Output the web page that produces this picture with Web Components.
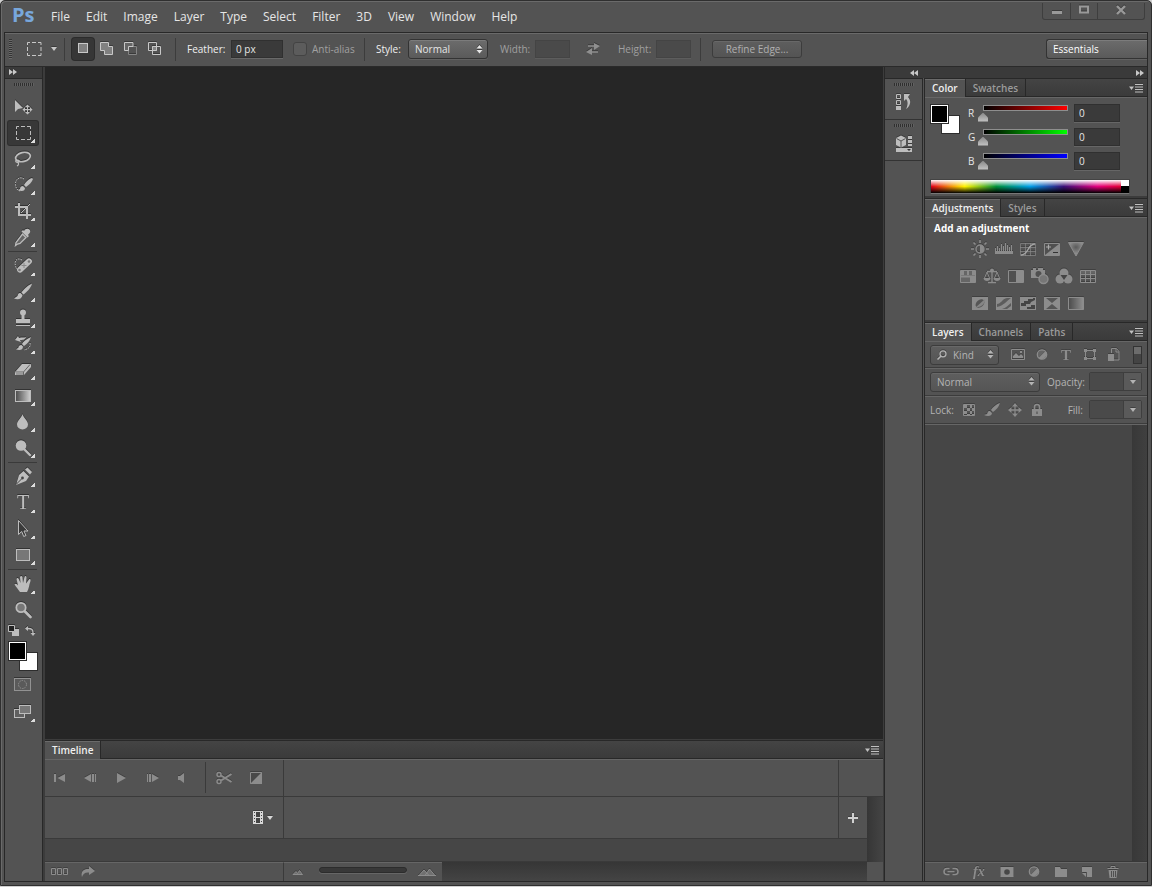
<!DOCTYPE html>
<html lang="en">
<head>
<meta charset="utf-8">
<title>Ps</title>
<style>
    html, body { height: 100%; }
    body {
        margin: 0;
        background: #d0d0d0;
        font: 10px/14px "Open Sans", "Noto Sans", sans-serif;
        color: #e6e6e6;
    }
</style>
</head>
<body>
<ps-window>
    <ps-menu-bar slot="menu"></ps-menu-bar>
    <ps-options-bar slot="options"></ps-options-bar>
    <ps-toolbox slot="tools"></ps-toolbox>
    <ps-timeline slot="timeline"></ps-timeline>
    <ps-dock slot="dock">
        <ps-panel tabs="Color,Swatches"><ps-color></ps-color></ps-panel>
        <ps-panel tabs="Adjustments,Styles"><ps-adjustments></ps-adjustments></ps-panel>
        <ps-panel tabs="Layers,Channels,Paths" grow><ps-layers></ps-layers></ps-panel>
    </ps-dock>
</ps-window>

<script>
// name: [width, height, markup]
const ICONS = {
    // toolbox
    move: [20, 20, '<path d="M2 3v12l3-3 5-1z" fill="currentColor"/><path d="M14.500 8v9M10 12.500h9" stroke="currentColor"/><path d="M14.500 7.500l2.500 2.500h-5zM14.500 17.500l2.500-2.500h-5zM9.500 12.500l2.500-2.500v5zM19.500 12.500l-2.500-2.500v5z" fill="currentColor"/>'],
    marquee: [20, 20, '<path d="M3.500 6V3.500H6M8 3.500h4M14 3.500h3.500V6M17.500 8v4M17.500 14v2.500H14M12 16.500H8M6 16.500H3.500V14M3.500 12V8" stroke="currentColor" fill="none"/>'],
    lasso: [20, 20, '<ellipse cx="10" cy="8" rx="7.500" ry="4.500" transform="rotate(-14 10 8)" stroke="currentColor" stroke-width="1.700" fill="none"/><path d="M3.500 11c-2 1 0 3 2 2s-1-3-2-1M5 13c1 2 1 3-1 4" stroke="currentColor" stroke-width="1.200" fill="none"/>'],
    quickselect: [20, 20, '<path d="M11 4C7 1 2 4 2.500 9.500S6 16 8 16" stroke="currentColor" stroke-dasharray="1.500 1" fill="none"/><path d="M19 3c-4 1-7 5-8 7l2 2c3-2 6-5 7-8zM10 11c-2 0-3 1-3 3l-2 1c4 2 7 1 7-2z" fill="currentColor"/>'],
    crop: [20, 20, '<path d="M6 2v12h12M2 6h12v12" stroke="currentColor" stroke-width="2" fill="none"/><path d="M8 12l9-9" stroke="currentColor"/>'],
    eyedropper: [20, 20, '<path d="M12 2.500c3-2 6 0 5 3l-2 2.500 1 1-1.500 1.500-6-6L10 3l1 1z" fill="currentColor"/><path d="M9.500 7l3.500 3.500-6 6-2.500.500-2 1.500.500-3z" fill="#666" stroke="currentColor" stroke-width="1.300"/>'],
    heal: [20, 20, '<path d="M9 4C4 1 1 5 2.500 9.500 3 13 5 14 6 14" stroke="currentColor" stroke-dasharray="1.500 1" fill="none"/><rect x="2.500" y="6.500" width="18" height="6" rx="3" transform="rotate(-43 11.500 9.500)" fill="currentColor"/><circle cx="6.500" cy="14" r="1.300" fill="#777"/><circle cx="16" cy="5.500" r="1.300" fill="#777"/><path d="M11 7v5M8.500 9.500h5" stroke="#888"/>'],
    brush: [20, 20, '<path d="M19 1.500C14 4 10 8 8.500 10.500l2 2C14 10 18 6 19 1.500zM7.500 11C5 11 5 12.500 4.500 14L1 16.500c4 1.500 8 .500 8.500-3.500z" fill="currentColor"/>'],
    stamp: [20, 20, '<circle cx="10" cy="4.500" r="3" fill="currentColor"/><path d="M8.500 7h3v4H17V15H3v-4h5.500zM3 17h14v1H3z" fill="currentColor"/>'],
    history: [20, 20, '<path d="M18 3C13 5 10 8 9 10l2 2c3-2 6-5 7-9zM8.500 11c-2 0-3 1-3 2.500L3 15.500c4 1 7 .500 7-3zM2 6l3-4 1 2c3-1 5 0 7-1-1 3-4 3-6 3l1 2z" fill="currentColor"/><path d="M17 9c1 4-2 6-6 7" stroke="currentColor" stroke-dasharray="1.500 1" fill="none"/>'],
    eraser: [20, 20, '<path d="M2 12l7-8h9v3l-7 8H2z" fill="currentColor"/><path d="M2.500 12h8L17 4.500M10.500 12v3" stroke="#666" fill="none"/><path d="M3 12h7v3H3z" fill="#999"/>'],
    gradient: [20, 20, '<defs><linearGradient id="g"><stop stop-color="#4a4a4a"/><stop offset="1" stop-color="#d0d0d0"/></linearGradient></defs><rect x="2.500" y="4.500" width="15" height="11" fill="url(#g)" stroke="currentColor"/>'],
    blur: [20, 20, '<path d="M9.500 2c1 4 5.500 6.500 5.500 10.500a5.500 5 0 0 1-11 0C4 8.500 8.500 6 9.500 2z" fill="currentColor"/>'],
    dodge: [20, 20, '<circle cx="8" cy="7.500" r="5.300" fill="currentColor"/><path d="M11 11l6 6" stroke="currentColor" stroke-width="2.400" stroke-linecap="round"/>'],
    pen: [20, 20, '<path d="M12 2.500l2.500-2 4.500 4.500-2 2.500z" fill="currentColor"/><path d="M10.500 4L16 9.500 13 14l-10 4 3-10z" fill="currentColor"/><path d="M3 17.500l6-6" stroke="#444"/><circle cx="9.500" cy="11" r="1.400" fill="#444"/>'],
    type: [20, 20, '<text x="10" y="16" text-anchor="middle" font-family="Liberation Serif, serif" font-size="20" fill="currentColor">T</text>'],
    path: [20, 20, '<path d="M5.500 1.500v14l3.200-3 2 5 2.300-1-2-4.500H15z" fill="#3a3a3a" stroke="currentColor"/>'],
    shape: [20, 20, '<rect x="3.500" y="4.500" width="13" height="11" fill="#777" stroke="currentColor"/>'],
    hand: [20, 20, '<path d="M7 18c-2-3-4-5-5.500-7.500 1-1.500 2.500-.500 3.500 1L3.500 5c.500-1.500 2-1 2.500.500L7.500 9 7 3c.500-1.500 2-1.500 2.500 0l.500 6L11.500 3c.500-1.500 2-1 2 .500L13 9.500 16 5.500c1-1 2 0 1.500 1.500-1.500 4-1.500 8-3.500 11z" fill="currentColor"/>'],
    zoom: [20, 20, '<circle cx="8" cy="7.500" r="4.700" fill="#777" stroke="currentColor" stroke-width="1.800"/><path d="M12 11.500l5.500 5.500" stroke="currentColor" stroke-width="2.600" stroke-linecap="round"/>'],
    defaults: [11, 11, '<path d="M4 4h7v7H4z" fill="currentColor"/><path d="M.500.500h6v6h-6z" fill="#222" stroke="currentColor"/>'],
    swap: [11, 11, '<path d="M3 3.500c4 0 5 1 5 4.500" stroke="currentColor" stroke-width="1.300" fill="none"/><path d="M3 1v5L0 3.500zM5.500 8h5L8 11z" fill="currentColor"/>'],
    mask: [18, 14, '<rect x=".500" y=".500" width="16" height="12" fill="#5a5a5a" stroke="#929292"/><circle cx="8.500" cy="6.500" r="4" stroke="#929292" stroke-dasharray="1.500 1" fill="none"/>'],
    screen: [18, 14, '<rect x=".500" y="4.500" width="10" height="8" fill="#606060" stroke="currentColor"/><rect x="5.500" y=".500" width="11" height="8" fill="#777" stroke="currentColor"/>'],
    // options bar
    selnew: [14, 14, '<rect x="2.500" y="1.500" width="9" height="9" fill="#808080" stroke="currentColor"/>'],
    seladd: [14, 14, '<path d="M.500.500h8v4h4v8h-8v-4h-4z" fill="#808080" stroke="currentColor"/>'],
    selsub: [14, 14, '<path d="M4.500 4.500h8v8h-8z" stroke="#858585" fill="none"/><path d="M9 .500H.500v8h4v-4H9z" fill="#666" stroke="currentColor"/>'],
    selint: [14, 14, '<path d="M4 4h5v5H4z" fill="#858585"/><path d="M.500.500h8v8h-8zM4.500 4.500h8v8h-8z" stroke="currentColor" fill="none"/>'],
    exchange: [14, 12, '<path d="M2 3h7M5 9h7" stroke="currentColor" stroke-width="1.600"/><path d="M8 0l6 3-6 4zM6 5v7L0 9z" fill="currentColor"/>'],
    caret: [6, 4, '<path d="M0 0h6L3 4z" fill="currentColor"/>'],
    updown: [7, 9, '<path d="M3.500 0l3 3.500h-6zM.500 5h6l-3 3.500z" fill="currentColor"/>'],
    min: [12, 10, '<path d="M1 6h10v3H1z" fill="currentColor"/>'],
    max: [12, 10, '<path d="M2 1.500h8v6H2z" stroke="currentColor" stroke-width="2" fill="none"/>'],
    close: [12, 10, '<path d="M2 1l8 8M10 1L2 9" stroke="currentColor" stroke-width="2.400"/>'],
    expand: [8, 6, '<path d="M0 0l4 3-4 3zM4 0l4 3-4 3z" fill="currentColor"/>'],
    collapse: [8, 6, '<path d="M4 0L0 3l4 3zM8 0L4 3l4 3z" fill="currentColor"/>'],
    flyout: [14, 9, '<path d="M0 2.500h5L2.500 6z" fill="currentColor"/><path d="M6 .500h8M6 3h8M6 5.500h8M6 8h8" stroke="currentColor"/>'],
    historypanel: [16, 18, '<path d="M.500 1.500h4v4h-4zM.500 7.500h4v4h-4z" stroke="currentColor" fill="none"/><path d="M0 13h5v4H0zM8 1h6L12 4c4 4 2 10-2 12 2-4 2-8 0-10L8 8z" fill="currentColor"/>'],
    properties: [16, 18, '<path d="M0 4l5-2.500L10 4v7l-5 2.500L0 11z" fill="currentColor"/><path d="M.500 4.500L5 7l4.500-2.500M5 7v6" stroke="#555" fill="none"/><path d="M12 2h4v3h-4zM12 6h4v3h-4zM12 10h4v2h-4zM0 14h16v4H0z" fill="currentColor"/><path d="M11 15h4l-2 2z" fill="#333"/>'],
    // adjustments
    brightness: [18, 18, '<circle cx="9" cy="9" r="4" stroke="currentColor" stroke-width="1.400" fill="none"/><path d="M9 5a4 4 0 0 1 0 8z" fill="currentColor"/><path d="M9 0v3M9 15v3M0 9h3M15 9h3M2.500 2.500l2 2M13.500 13.500l2 2M15.500 2.500l-2 2M4.500 13.500l-2 2" stroke="currentColor" stroke-width="1.600"/>'],
    levels: [18, 18, '<path d="M0 11h18v3H0z" fill="currentColor"/><path d="M.500 11V8M2.500 11V6M4.500 11V8M6.500 11V4M8.500 11V6M10.500 11V3M12.500 11V5M14.500 11V7M16.500 11V5" stroke="currentColor"/>'],
    curves: [18, 18, '<path d="M1.500 3.500h15v12h-15zM6.500 3v13M11.500 3v13M1 7.500h16M1 11.500h16" stroke="currentColor" stroke-opacity=".7" fill="none"/><path d="M2 15c8 0 6-11 14-11" stroke="#a5a5a5" stroke-width="1.400" fill="none"/>'],
    exposure: [18, 18, '<path d="M1.500 3.500h15v12h-15z" stroke="currentColor" fill="#505050"/><path d="M16 4v11H2z" fill="currentColor"/><path d="M3 7h5M5.500 4.500v5" stroke="#aaa" stroke-width="1.200"/><path d="M10 12.500h5" stroke="#333"/>'],
    vibrance: [18, 18, '<defs><radialGradient id="v" cy=".35"><stop stop-color="#5a5a5a"/><stop offset="1" stop-color="#909090"/></radialGradient></defs><path d="M1.500 2.500h15L9 16z" fill="url(#v)" stroke="currentColor"/>'],
    hue: [18, 18, '<path d="M1.500 3.500h15v12h-15z" stroke="currentColor" fill="#666"/><path d="M2 4h3v4H2zM8 4h2v4H8zM13 4h3v4h-3zM1 8.500h16v2H1zM11 10h5v5h-5z" fill="currentColor"/>'],
    balance: [18, 18, '<path d="M9 2v13M4 4.500h10M5 15.500h8" stroke="currentColor" stroke-width="1.400"/><path d="M4 5L1.500 11M4 5l2.500 6M14 5l-2.500 6M14 5l2.500 6" stroke="currentColor"/><path d="M.500 11h7c0 4-7 4-7 0zM10.500 11h7c0 4-7 4-7 0z" fill="currentColor"/><circle cx="9" cy="3.500" r="2" fill="currentColor"/>'],
    bw: [18, 18, '<path d="M1.500 3.500h15v12h-15z" stroke="currentColor" fill="#505050"/><path d="M9 4h7v11H9z" fill="currentColor"/>'],
    photo: [18, 18, '<path d="M0 3h2V1h3v2h2V1h5v2h2v8H0z" fill="currentColor"/><circle cx="7.500" cy="7" r="3" fill="#505050"/><circle cx="12.500" cy="12" r="4.500" fill="#777" stroke="currentColor" stroke-width="1.500"/>'],
    mixer: [18, 18, '<circle cx="9" cy="6" r="4.500" fill="currentColor"/><circle cx="5" cy="12" r="4.500" fill="currentColor"/><circle cx="13" cy="12" r="4.500" fill="currentColor"/><path d="M5.500 8h7L9 13z" fill="#444"/>'],
    lookup: [18, 18, '<path d="M1.500 3.500h15v12h-15zM6.500 3v13M11.500 3v13M1 7.500h16M1 11.500h16" stroke="currentColor" fill="none"/><path d="M2 4h14v3H2z" fill="currentColor" opacity=".4"/>'],
    invert: [18, 18, '<path d="M1 3h16v13H1z" fill="currentColor"/><ellipse cx="9" cy="9.500" rx="5" ry="3.500" transform="rotate(-40 9 9.500)" fill="#555"/><path d="M4 14L14 5c1 3-3 8-7 8z" fill="#858585"/>'],
    posterize: [18, 18, '<path d="M1 3h16v13H1z" fill="currentColor"/><path d="M2 10C6 10 7 5 12 4h4C11 7 10 11 2 13zM7 15c4-1 6-4 9-6v3l-4 3z" fill="#5c5c5c"/>'],
    threshold: [18, 18, '<path d="M1 3h16v13H1z" fill="currentColor"/><path d="M2 9h3V7h4V5h5V4h2v2l-4 2-1 2H7v2H2zM8 15v-2h4v-2h4v4z" fill="#444"/>'],
    gradmap: [18, 18, '<path d="M1 3h16v13H1z" fill="currentColor"/><path d="M3 4h12L9 9zM3 15h12l-6-5z" fill="#555"/>'],
    selective: [18, 18, '<defs><linearGradient id="s"><stop stop-color="#4a4a4a"/><stop offset="1" stop-color="#909090"/></linearGradient></defs><path d="M1.500 3.500h15v12h-15z" stroke="currentColor" fill="url(#s)"/>'],
    // layers
    search: [10, 10, '<circle cx="6" cy="3.800" r="3" stroke="currentColor" stroke-width="1.300" fill="none"/><path d="M4 6L.500 9.500" stroke="currentColor" stroke-width="1.600"/>'],
    image: [14, 14, '<path d="M.500 1.500h13v10H.500z" stroke="currentColor" fill="none"/><path d="M2 10V8l3-3 3 3 2-2 2 2v2z" fill="currentColor"/><path d="M9 3h2v2H9z" fill="currentColor"/>'],
    adjust: [14, 14, '<circle cx="7" cy="6.500" r="4.700" stroke="currentColor" stroke-width="1.300" fill="none"/><path d="M10.500 3a5 5 0 0 1-7 7z" fill="currentColor"/><path d="M3.500 10a5 5 0 0 1 7-7z" fill="currentColor" opacity=".4"/>'],
    typefilter: [14, 14, '<text x="7" y="12" text-anchor="middle" font-family="Liberation Serif, serif" font-weight="bold" font-size="15" fill="currentColor">T</text>'],
    vector: [14, 14, '<path d="M3 2.500h8M3 10.500h8M2.500 3v7M11.500 3v7" stroke="currentColor"/><path d="M1 1h3v3H1zM10 1h3v3h-3zM1 9h3v3H1zM10 9h3v3h-3z" fill="currentColor"/>'],
    smart: [14, 14, '<path d="M4.500 5V.500h5l2.500 3v8.500H7M9 1v3h3" stroke="currentColor" fill="none"/><path d="M1 6h6v7H1z" fill="currentColor"/>'],
    pixels: [14, 14, '<path d="M1.500 1.500h11v11h-11z" stroke="currentColor" fill="none"/><path d="M2 2h3v3H2zM8 2h2v3H8zM5 5h3v3H5zM10 5h2v3h-2zM2 8h3v3H2zM8 8h2v3H8zM5 11h3v2H5zM10 11h2v2h-2z" fill="currentColor"/>'],
    lockbrush: [16, 14, '<path d="M16 0c-4 1-8 5-9 7l2 2c3-2 6-5 7-9zM6 8c-3 0-2 2-3 3l-3 1c4 2 8 1 8-2z" fill="currentColor"/>'],
    lockmove: [14, 14, '<path d="M7 2v10M2 7h10" stroke="currentColor" stroke-width="1.300"/><path d="M7 0l3 3.500H4zM7 14l3-3.500H4zM0 7l3.500-3v6zM14 7l-3.500-3v6z" fill="currentColor"/>'],
    lock: [14, 14, '<path d="M4.500 7V4a2.500 2.500 0 0 1 5 0v3" stroke="currentColor" stroke-width="1.600" fill="none"/><path d="M2 6h10v7H2z" fill="currentColor"/><path d="M6.500 8.500h1v2.500h-1z" fill="#444"/>'],
    link: [16, 12, '<path d="M6.500 8.500H4a3 3 0 0 1 0-6h2.500M9.500 2.500H12a3 3 0 0 1 0 6H9.500M4.500 5.500h7" stroke="currentColor" stroke-width="1.600" fill="none"/>'],
    fx: [16, 12, '<text x="1" y="10" font-family="Liberation Serif, serif" font-style="italic" font-weight="bold" font-size="14" fill="currentColor">fx</text>'],
    addmask: [14, 12, '<path d="M.500 1h13v10H.500z" fill="currentColor"/><circle cx="7" cy="6" r="2.800" fill="#484848"/>'],
    folder: [14, 12, '<path d="M1 1h5l1 2h6v8H1z" fill="currentColor"/>'],
    newlayer: [14, 12, '<path d="M2 1h10v10H7V6H2z" fill="currentColor"/><path d="M2 7h4v4z" fill="currentColor"/>'],
    trash: [12, 12, '<path d="M4 2V.500h4V2M.500 2.500h11" stroke="currentColor" fill="none"/><path d="M1.500 4h9l-1 8h-7z" fill="currentColor"/><path d="M4.500 5v6M6.500 5v6M8.500 5v6" stroke="#505050"/>'],
    // timeline
    first: [12, 10, '<path d="M0 1h2v8H0zM11 1v8L3.500 5z" fill="currentColor"/>'],
    prev: [12, 10, '<path d="M6 1v8L-1 5zM7 1h2v8H7zM10 1h1v8h-1z" fill="currentColor"/>'],
    play: [12, 10, '<path d="M1 0v10l9-5z" fill="currentColor"/>'],
    next: [12, 10, '<path d="M0 1h1v8H0zM2 1h2v8H2zM5 1v8l7-4z" fill="currentColor"/>'],
    audio: [8, 10, '<path d="M0 3h2l4-3v10L2 7H0z" fill="currentColor"/>'],
    scissors: [15, 14, '<circle cx="3" cy="3.500" r="2" stroke="currentColor" stroke-width="1.500" fill="none"/><circle cx="3" cy="10.500" r="2" stroke="currentColor" stroke-width="1.500" fill="none"/><path d="M5 4.500L15.500 11M5 9.500L15.500 3" stroke="currentColor" stroke-width="2"/>'],
    transition: [12, 12, '<path d="M.500.500h11v11H.500z" stroke="currentColor" fill="#484848"/><path d="M12 0v12H0z" fill="currentColor"/>'],
    film: [10, 13, '<path d="M0 0h10v13H0z" fill="currentColor"/><path d="M3 1h4v5H3zM3 7h4v5H3zM1 1h1v1H1zM1 4h1v1H1zM1 7h1v1H1zM1 10h1v1H1zM8 1h1v1H8zM8 4h1v1H8zM8 7h1v1H8zM8 10h1v1H8z" fill="#444"/>'],
    plus: [10, 10, '<path d="M5 0v10M0 5h10" stroke="currentColor" stroke-width="2"/>'],
    frames: [18, 8, '<path d="M.500.500h4v6h-4zM6.500.500h4v6h-4zM12.500.500h4v6h-4z" stroke="currentColor" fill="none"/>'],
    render: [14, 12, '<path d="M8 0l6 5-6 4V6.500C4 6 2 8 1 11-1 5 4 2.500 8 3z" fill="currentColor"/>'],
    smallhill: [10, 6, '<path d="M0 5.500h9.500L6.500 1.500l-2 3-1.500-2z" stroke="currentColor" fill="#707070"/>'],
    bighill: [18, 8, '<path d="M1 7.500L6 2l5 5.500M7 7.500L11.500 1 17 7.500zM0 7.500h18" stroke="currentColor" fill="#707070"/>']
};

const BASE = `
    :host { display: block; box-sizing: border-box; }
    * { box-sizing: border-box; }
    button, input, select { font: inherit; color: inherit; margin: 0; padding: 0; border: 0; border-radius: 0; background: none; }
    button { display: flex; align-items: center; justify-content: center; }
    select { appearance: none; }
`;

class PsElement extends HTMLElement {
    connectedCallback() {
        if (this.shadowRoot) return;
        this.attachShadow({ mode: 'open' });
        this.shadowRoot.innerHTML = `<style>${BASE}${this.styles()}</style>${this.markup()}`;
    }
    styles() { return ''; }
    markup() { return '<slot></slot>'; }
}

const icon = name => `<ps-icon name="${name}"></ps-icon>`;
const iconButton = (name, label, cls = '') => `<button type="button" class="${cls}" aria-label="${label}">${icon(name)}</button>`;

class PsIcon extends PsElement {
    styles() {
        return `
            :host { flex: none; }
            svg { display: block; overflow: visible; filter: drop-shadow(0 -1px 0 var(--icon-shadow, #3a3a3a)); }
        `;
    }
    markup() {
        const [w, h, body] = ICONS[this.getAttribute('name')];
        return `<svg width="${w}" height="${h}" viewBox="0 0 ${w} ${h}" aria-hidden="true">${body}</svg>`;
    }
}

class PsWindow extends PsElement {
    styles() {
        return `
            :host {
                display: flex;
                flex-direction: column;
                height: calc(100vh - 1px);
                padding: 2px 3px 3px 3px;
                border: 1px solid #2f2f2f;
                border-radius: 5px 5px 0 0;
                background: #535353;
                box-shadow: inset 1px 1px 0 #6a6a6a;
            }
            .frame {
                flex: 1;
                display: flex;
                flex-direction: column;
                min-height: 0;
                border: 1px solid #282828;
            }
            .main { flex: 1; display: flex; min-height: 0; }
            .center { flex: 1; display: flex; flex-direction: column; min-width: 0; background: #3c3c3c; padding: 0 1px 0 2px; }
            .canvas { flex: 1; background: #262626; }
        `;
    }
    markup() {
        return `
            <slot name="menu"></slot>
            <div class="frame">
                <slot name="options"></slot>
                <div class="main">
                    <slot name="tools"></slot>
                    <div class="center">
                        <div class="canvas"></div>
                        <slot name="timeline"></slot>
                    </div>
                    <slot name="dock"></slot>
                </div>
            </div>
        `;
    }
}

class PsMenuBar extends PsElement {
    styles() {
        return `
            :host { display: flex; height: 29px; padding-left: 8px; font-size: 12px; line-height: 16px; }
            .logo { width: 39px; font-size: 20px; line-height: 24px; font-weight: bold; color: #78a7dc; }
            nav { flex: 1; display: flex; gap: 16px; align-items: center; padding-bottom: 1px; }
            .controls { display: flex; height: 17px; margin-right: 3px; border: 1px solid #3e3e3e; border-top: 0; border-radius: 0 0 3px 3px; color: #999; }
            .controls button { width: 27px; padding-bottom: 2px; }
            .controls button + button { border-left: 1px solid #3e3e3e; }
            .controls button:last-child { width: 47px; }
        `;
    }
    markup() {
        const items = ['File', 'Edit', 'Image', 'Layer', 'Type', 'Select', 'Filter', '3D', 'View', 'Window', 'Help'];
        return `
            <div class="logo">Ps</div>
            <nav>${items.map(i => `<button type="button">${i}</button>`).join('')}</nav>
            <div class="controls">
                ${iconButton('min', 'Minimize')}${iconButton('max', 'Maximize')}${iconButton('close', 'Close')}
            </div>
        `;
    }
}

// Drop-down with its own arrows; attributes: label, value, icon, plain
class PsSelect extends PsElement {
    styles() {
        return `
            :host {
                display: flex;
                align-items: center;
                height: 20px;
                border: 1px solid #333;
                border-radius: 3px;
                background: linear-gradient(#6c6c6c, #5a5a5a);
                box-shadow: inset 0 1px 0 #7c7c7c, 0 1px 0 #616161;
            }
            select { flex: 1; min-width: 0; height: 18px; padding-left: 6px; outline: 0; }
            ps-icon { margin-right: 4px; }
            ps-icon.lead { margin: 0 0 0 6px; }
        `;
    }
    markup() {
        const lead = this.getAttribute('icon');
        return `
            ${lead ? `<ps-icon class="lead" name="${lead}"></ps-icon>` : ''}
            <select aria-label="${this.getAttribute('label')}"><option>${this.getAttribute('value')}</option></select>
            ${this.hasAttribute('plain') ? '' : icon('updown')}
        `;
    }
}

class PsOptionsBar extends PsElement {
    styles() {
        return `
            :host {
                display: flex;
                align-items: center;
                height: 34px;
                border-top: 1px solid #6a6a6a;
                border-bottom: 1px solid #2a2a2a;
                padding: 0 0 2px 4px;
                --icon-shadow: #3a3a3a;
            }
            .grip { width: 3px; height: 20px; margin-right: 14px; background: repeating-linear-gradient(#333 0 1px, #6a6a6a 1px 2px); }
            .preset { gap: 9px; width: 32px; color: #c8c8c8; }
            .sep { width: 1px; height: 23px; background: #3c3c3c; }
            .preset + .sep { margin-left: 6px; }
            .modes { display: flex; gap: 2px; margin: 0 9px 0 7px; color: #c8c8c8; }
            .modes button { width: 22px; height: 22px; border-radius: 3px; }
            .modes .on { background: #363636; box-shadow: 0 0 0 1px #2b2b2b; }
            label { color: #f0f0f0; }
            input[type=text] {
                height: 18px;
                padding: 0 4px;
                background: #3a3a3a;
                border: 1px solid #303030;
                box-shadow: 0 1px 0 #696969;
            }
            input[type=text]:disabled { background: #4a4a4a; border-color: #444; box-shadow: 0 1px 0 #5d5d5d; }
            input[type=checkbox] { appearance: none; width: 14px; height: 14px; border: 1px solid #434343; border-radius: 3px; background: #5c5c5c; }
            .off { color: #a0a0a0; }
            .exchange { margin: 0 18px 0 16px; color: #8f8f8f; }
            .refine { width: 90px; height: 18px; border: 1px solid #3c3c3c; border-radius: 3px; background: linear-gradient(#5e5e5e, #545454); color: #b0b0b0; box-shadow: inset 0 1px 0 #686868; }
            .gap { flex: 1; }
            .workspace { width: 101px; border-right: 0; border-radius: 3px 0 0 3px; color: #fff; }
        `;
    }
    markup() {
        return `
            <div class="grip"></div>
            <button type="button" class="preset" aria-label="Tool preset">
                <svg width="15" height="14" aria-hidden="true"><path d="M.5 3V.5H3M5 .5h4M11 .5h3V3M14 5v4M14 11v2.500h-3M9 13.500H5M3 13.500H.5V11M.5 9V5" stroke="currentColor" fill="none"/></svg>
                ${icon('caret')}
            </button>
            <div class="sep"></div>
            <div class="modes">
                ${iconButton('selnew', 'New selection', 'on')}${iconButton('seladd', 'Add to selection')}${iconButton('selsub', 'Subtract from selection')}${iconButton('selint', 'Intersect with selection')}
            </div>
            <div class="sep"></div>
            <label for="feather" style="width: 44px; margin-left: 11px">Feather:</label>
            <input id="feather" type="text" value="0 px" style="width: 52px">
            <input id="aa" type="checkbox" disabled style="margin: 0 5px 0 10px">
            <label for="aa" class="off" style="width: 52px">Anti-alias</label>
            <div class="sep"></div>
            <label style="width: 32px; margin-left: 11px">Style:</label>
            <ps-select label="Style" value="Normal" style="width: 80px"></ps-select>
            <label for="w" class="off" style="width: 35px; margin-left: 12px">Width:</label>
            <input id="w" type="text" disabled style="width: 35px">
            ${iconButton('exchange', 'Swap height and width', 'exchange')}
            <label for="h" class="off" style="width: 38px">Height:</label>
            <input id="h" type="text" disabled style="width: 35px">
            <div class="sep" style="margin: 0 11px 0 9px"></div>
            <button type="button" class="refine">Refine Edge...</button>
            <div class="gap"></div>
            <ps-select class="workspace" label="Workspace" value="Essentials" plain></ps-select>
        `;
    }
}

class PsSwatches extends PsElement {
    styles() {
        return `
            :host { display: grid; width: 30px; height: 30px; grid-template: 11px 9px 10px / 11px 8px 11px; }
            button { border: 1px solid #2d2d2d; }
            .back { grid-area: 2 / 2 / 4 / 4; background: #fff; }
            .front { grid-area: 1 / 1 / 3 / 3; background: #000; box-shadow: inset 0 0 0 1px #fff; }
        `;
    }
    markup() {
        return `
            <button type="button" class="back" aria-label="Background color"></button>
            <button type="button" class="front" aria-label="Foreground color"></button>
        `;
    }
}

class PsToolbox extends PsElement {
    styles() {
        return `
            :host { display: flex; flex-direction: column; width: 38px; border-right: 1px solid #282828; color: #bdbdbd; --icon-shadow: #333; }
            .head { justify-content: flex-start; height: 12px; padding: 0 0 1px 4px; background: #3a3a3a; border-bottom: 1px solid #2a2a2a; color: #c8c8c8; }
            .grip { width: 20px; height: 3px; margin: 4px 0 9px 9px; background: repeating-linear-gradient(90deg, #2f2f2f 0 1px, #616161 1px 2px); }
            .tools { display: flex; flex-direction: column; gap: 2px; padding-left: 3px; }
            .tools button { width: 30px; height: 24px; border-radius: 2px; }
            .tools button.on { background: #383838; box-shadow: 0 0 0 1px #2e2e2e; }
            .more { background: linear-gradient(135deg, transparent 50%, #dcdcdc 50%) no-repeat right 3px bottom 2px / 4px 4px; }
            .tools .on.more { background: linear-gradient(135deg, transparent 50%, #dcdcdc 50%) no-repeat right 3px bottom 2px / 4px 4px, #383838; }
            hr { width: 29px; height: 1px; margin: 0; border: 0; background: #3a3a3a; }
            .mini { display: flex; justify-content: space-between; width: 28px; margin: 3px 0 5px 3px; }
            ps-swatches { margin-left: 3px; }
            .modes { display: flex; flex-direction: column; gap: 3px; padding: 2px 0 0 3px; }
            .modes button { width: 30px; height: 24px; }
        `;
    }
    markup() {
        const groups = [
            ['move', 'marquee', 'lasso', 'quickselect', 'crop', 'eyedropper'],
            ['heal', 'brush', 'stamp', 'history', 'eraser', 'gradient', 'blur', 'dodge'],
            ['pen', 'type', 'path', 'shape'],
            ['hand', 'zoom']
        ];
        const single = ['move', 'zoom'];
        const tool = n => iconButton(n, n, (n === 'marquee' ? 'on ' : '') + (single.includes(n) ? '' : 'more'));
        return `
            <button type="button" class="head" aria-label="Expand panels">${icon('expand')}</button>
            <div class="grip"></div>
            <div class="tools">${groups.map(g => g.map(tool).join('')).join('<hr>')}</div>
            <div class="mini">${iconButton('defaults', 'Default colors')}${iconButton('swap', 'Swap colors')}</div>
            <ps-swatches></ps-swatches>
            <div class="modes">${iconButton('mask', 'Quick mask')}${iconButton('screen', 'Screen mode', 'more')}</div>
        `;
    }
}

class PsPanel extends PsElement {
    styles() {
        return `
            :host { display: flex; flex-direction: column; border-top: 1px solid #282828; background: #535353; }
            :host([grow]) { flex: 1; min-height: 0; }
            .bar { display: flex; height: 18px; background: linear-gradient(#444, #3a3a3a); box-shadow: inset 0 -1px 0 #282828; flex: none; }
            .bar button { padding: 0 7px 1px; font-weight: 600; line-height: 14px; color: #9b9b9b; border-right: 1px solid #282828; }
            .bar button.on { background: #535353; color: #efefef; box-shadow: inset 0 1px 0 #6a6a6a; }
            .bar .fly { margin-left: auto; padding: 0 4px; border: 0; color: #c0c0c0; }
            .body { flex: 1; display: flex; flex-direction: column; min-height: 0; border-top: 1px solid #666; }
        `;
    }
    markup() {
        const tabs = this.getAttribute('tabs').split(',');
        return `
            <div class="bar">
                ${tabs.map((t, i) => `<button type="button" class="${i ? '' : 'on'}">${t}</button>`).join('')}
                ${iconButton('flyout', 'Panel menu', 'fly')}
            </div>
            <div class="body"><slot></slot></div>
        `;
    }
}

class PsDock extends PsElement {
    styles() {
        return `
            :host { display: flex; flex-direction: column; width: 263px; border-left: 1px solid #282828; }
            .head { display: flex; justify-content: space-between; height: 11px; padding: 0 3px 0 25px; background: #3a3a3a; color: #c8c8c8; }
            .cols { flex: 1; display: flex; min-height: 0; }
            .strip { width: 38px; border-right: 1px solid #282828; border-top: 1px solid #282828; color: #bdbdbd; }
            .strip button { flex-direction: column; justify-content: flex-start; gap: 7px; width: 100%; height: 41px; padding-top: 4px; border-bottom: 1px solid #333; }
            .grip { width: 20px; height: 3px; background: repeating-linear-gradient(90deg, #2f2f2f 0 1px, #616161 1px 2px); }
            .panels { flex: 1; display: flex; flex-direction: column; gap: 2px; min-width: 0; margin-left: 1px; border-left: 1px solid #282828; background: #3c3c3c; }
        `;
    }
    markup() {
        return `
            <div class="head">${iconButton('collapse', 'Expand panels')}${iconButton('expand', 'Collapse to icons')}</div>
            <div class="cols">
                <div class="strip">
                    <button type="button" aria-label="History"><span class="grip"></span>${icon('historypanel')}</button>
                    <button type="button" aria-label="Properties"><span class="grip"></span>${icon('properties')}</button>
                </div>
                <div class="panels"><slot></slot></div>
            </div>
        `;
    }
}

class PsColor extends PsElement {
    styles() {
        return `
            :host { height: 98px; padding: 6px 17px 0 5px; }
            .top { display: flex; height: 75px; }
            .rows { flex: 1; display: flex; flex-direction: column; gap: 6px; min-width: 0; margin-left: 8px; }
            .row { display: flex; height: 18px; align-items: center; }
            label { width: 10px; }
            input[type=range] {
                appearance: none;
                flex: 1;
                min-width: 0;
                height: 18px;
                margin-right: 1px;
                background:
                    linear-gradient(90deg, #000, var(--hue)) no-repeat 6px 2px / calc(100% - 12px) 4px,
                    linear-gradient(#8e8e8e, #8e8e8e) no-repeat 5px 1px / calc(100% - 10px) 6px;
            }
            input[type=range]::-webkit-slider-thumb {
                appearance: none;
                width: 10px;
                height: 9px;
                margin-top: 8px;
                background: linear-gradient(#8a8a8a, #c4c4c4);
                clip-path: polygon(50% 0, 100% 55%, 100% 100%, 0 100%, 0 55%);
            }
            input[type=text] { flex: none; width: 46px; height: 18px; margin-right: 10px; padding: 0 4px; background: #3a3a3a; border: 1px solid #303030; box-shadow: 0 1px 0 #666; }
            .spectrum {
                display: flex;
                justify-content: flex-end;
                height: 15px;
                border: 1px solid #444;
                border-bottom-color: #777;
                background: linear-gradient(#fff, #fff0 50%, #0000 50%, #000), linear-gradient(90deg, #e2001a, #fff200 17%, #00913a 33%, #009fe8 50%, #3a1078 67%, #e5007f 84%, #e2001a);
            }
            .spectrum i { width: 8px; background: linear-gradient(#fff 50%, #000 50%); }
        `;
    }
    markup() {
        const row = (n, c) => `
            <div class="row">
                <label for="${n}">${n}</label>
                <input type="range" min="0" max="255" value="0" aria-label="${n} slider" style="--hue: ${c}">
                <input id="${n}" type="text" value="0">
            </div>`;
        return `
            <div class="top">
                <ps-swatches></ps-swatches>
                <div class="rows">${row('R', '#f00')}${row('G', '#0f0')}${row('B', '#00f')}</div>
            </div>
            <div class="spectrum"><i></i></div>
        `;
    }
}

class PsAdjustments extends PsElement {
    styles() {
        return `
            :host { height: 102px; padding: 3px 8px 0 9px; color: #8c8c8c; --icon-shadow: #404040; }
            h3 { margin: 0 0 5px; font-size: 10px; line-height: 14px; color: #fff; }
            div { display: flex; justify-content: center; gap: 6px; margin-bottom: 9px; padding-right: 17px; }
        `;
    }
    markup() {
        const rows = [
            ['brightness', 'levels', 'curves', 'exposure', 'vibrance'],
            ['hue', 'balance', 'bw', 'photo', 'mixer', 'lookup'],
            ['invert', 'posterize', 'threshold', 'gradmap', 'selective']
        ];
        return `<h3>Add an adjustment</h3>${rows.map(r => `<div>${r.map(n => iconButton(n, n)).join('')}</div>`).join('')}`;
    }
}

class PsLayers extends PsElement {
    styles() {
        return `
            :host { flex: 1; display: flex; flex-direction: column; min-height: 0; color: #b4b4b4; --icon-shadow: #404040; }
            .row { display: flex; align-items: center; height: 28px; padding: 0 5px; border-bottom: 1px solid #3c3c3c; box-shadow: 0 1px 0 #666; }
            .row:first-of-type { height: 26px; }
            .filters { flex: 1; display: flex; gap: 10px; margin-left: 12px; color: #8c8c8c; }
            .toggle { width: 9px; height: 18px; border: 1px solid #333; background: linear-gradient(#6c6c6c 45%, #444 45%); }
            ps-select { border-color: #3c3c3c; background: linear-gradient(#5e5e5e, #555); box-shadow: inset 0 1px 0 #686868; }
            .combo { display: flex; width: 53px; height: 19px; margin-left: auto; border: 1px solid #3e3e3e; border-radius: 2px; }
            .combo input { flex: 1; min-width: 0; background: #4a4a4a; }
            .combo button { width: 18px; border-left: 1px solid #3e3e3e; background: #5a5a5a; }
            .locks { display: flex; gap: 8px; margin-left: 8px; color: #8c8c8c; }
            .list { flex: 1; background: linear-gradient(90deg, #383838, #404040) no-repeat right / 15px 100%, #464646; border-bottom: 1px solid #383838; margin-top: 1px; }
            .foot { display: flex; align-items: center; justify-content: space-between; height: 19px; padding: 0 28px 0 18px; border-top: 1px solid #666; color: #8c8c8c; }
        `;
    }
    markup() {
        return `
            <div class="row">
                <ps-select icon="search" label="Filter type" value="Kind" style="width: 69px"></ps-select>
                <div class="filters">${['image', 'adjust', 'typefilter', 'vector', 'smart'].map(n => iconButton(n, n)).join('')}</div>
                <button type="button" class="toggle" aria-label="Toggle filtering"></button>
            </div>
            <div class="row">
                <ps-select label="Blend mode" value="Normal" style="width: 110px"></ps-select>
                <label for="opacity" style="margin-left: 7px">Opacity:</label>
                <div class="combo"><input id="opacity" type="text">${iconButton('caret', 'Opacity slider')}</div>
            </div>
            <div class="row">
                <span>Lock:</span>
                <div class="locks">${['pixels', 'lockbrush', 'lockmove', 'lock'].map(n => iconButton(n, n)).join('')}</div>
                <label for="fill" style="margin: 0 6px 0 auto">Fill:</label>
                <div class="combo" style="margin-left: 0"><input id="fill" type="text">${iconButton('caret', 'Fill slider')}</div>
            </div>
            <div class="list"></div>
            <div class="foot">${['link', 'fx', 'addmask', 'adjust', 'folder', 'newlayer', 'trash'].map(n => iconButton(n, n)).join('')}</div>
        `;
    }
}

class PsTimeline extends PsElement {
    styles() {
        return `
            :host { border-top: 1px solid #3c3c3c; color: #8c8c8c; --icon-shadow: #404040; }
            .grid {
                display: grid;
                grid-template-columns: 239px 1fr 28px 16px;
                grid-template-rows: 37px 42px 23px;
            }
            .grid > div { display: flex; align-items: center; min-width: 0; border-right: 1px solid #3a3a3a; border-bottom: 1px solid #3a3a3a; }
            .play { padding: 0 0 1px 9px; }
            .play button { flex: none; margin-right: 19px; }
            .play .sep { flex: none; align-self: stretch; width: 1px; margin: 2px 10px 2px 0; background: #3a3a3a; }
            .grid .wide { grid-column: 3 / 5; border-right: 0; }
            .grid .media { justify-content: flex-end; padding-right: 10px; color: #d8d8d8; }
            .media button { gap: 4px; }
            .grid .add { justify-content: center; border-right: 0; color: #d0d0d0; }
            .grid .scroll { grid-row: 2 / 4; grid-column: 4; border: 0; background: linear-gradient(90deg, #363636, #444); }
            .grid .empty { grid-column: 1 / 4; border-right: 0; background: #464646; }
            .foot { display: flex; height: 19px; }
            .foot div { display: flex; align-items: center; }
            .left { width: 239px; gap: 12px; padding-left: 6px; border-top: 1px solid #666; border-right: 1px solid #3a3a3a; }
            .zoom { width: 158px; gap: 10px; padding: 0 6px 0 9px; border-top: 1px solid #666; }
            .zoom input { appearance: none; flex: 1; min-width: 0; height: 6px; margin: 0 1px 4px 6px; border: 1px solid #2c2c2c; border-radius: 3px; background: #383838; box-shadow: 0 1px 0 #666; }
            .zoom input::-webkit-slider-thumb { appearance: none; width: 1px; height: 1px; }
            .hscroll { flex: 1; background: linear-gradient(#363636, #444); }
            .corner { width: 16px; }
        `;
    }
    markup() {
        return `
            <ps-panel tabs="Timeline">
                <div class="grid">
                    <div class="play">
                        ${iconButton('first', 'First frame')}${iconButton('prev', 'Previous frame')}${iconButton('play', 'Play')}${iconButton('next', 'Next frame')}${iconButton('audio', 'Audio')}
                        <span class="sep"></span>
                        ${iconButton('scissors', 'Split')}${iconButton('transition', 'Transition')}
                    </div>
                    <div></div>
                    <div class="wide"></div>
                    <div class="media"><button type="button" aria-label="Media">${icon('film')}${icon('caret')}</button></div>
                    <div></div>
                    <div class="add">${iconButton('plus', 'Add media')}</div>
                    <div class="scroll"></div>
                    <div class="empty"></div>
                </div>
                <div class="foot">
                    <div class="left">${iconButton('frames', 'Frame animation')}${iconButton('render', 'Render')}</div>
                    <div class="zoom">${icon('smallhill')}<input type="range" aria-label="Timeline zoom" disabled>${icon('bighill')}</div>
                    <div class="hscroll"></div>
                    <div class="corner"></div>
                </div>
            </ps-panel>
        `;
    }
}

customElements.define('ps-icon', PsIcon);
customElements.define('ps-select', PsSelect);
customElements.define('ps-swatches', PsSwatches);
customElements.define('ps-menu-bar', PsMenuBar);
customElements.define('ps-options-bar', PsOptionsBar);
customElements.define('ps-toolbox', PsToolbox);
customElements.define('ps-panel', PsPanel);
customElements.define('ps-dock', PsDock);
customElements.define('ps-color', PsColor);
customElements.define('ps-adjustments', PsAdjustments);
customElements.define('ps-layers', PsLayers);
customElements.define('ps-timeline', PsTimeline);
customElements.define('ps-window', PsWindow);
</script>
</body>
</html>
